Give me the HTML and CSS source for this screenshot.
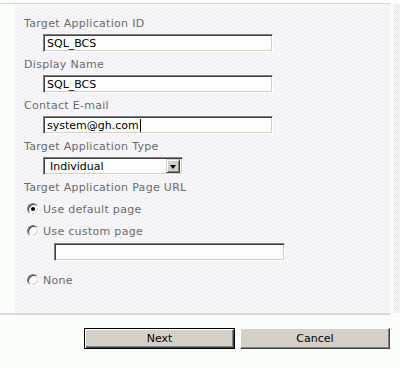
FILE: index.html
```html
<!DOCTYPE html>
<html lang="en">
<head>
  <meta charset="UTF-8">
  <title>Create New Target Application</title>
  <link rel="stylesheet" href="styles.css">
</head>
<body>
  <div class="page">
    <div class="top-rule"></div>
    <div class="section">
      <div class="panel">
        <div class="field-label">Target Application ID</div>
        <div class="textbox wide">SQL_BCS</div>

        <div class="field-label">Display Name</div>
        <div class="textbox wide">SQL_BCS</div>

        <div class="field-label">Contact E-mail</div>
        <div class="textbox wide">system@gh.com<span class="caret"></span></div>

        <div class="field-label">Target Application Type</div>
        <div class="dropdown">
          <span class="dropdown__text">Individual</span>
          <span class="dropdown__btn"><span class="arrow"></span></span>
        </div>

        <div class="field-label">Target Application Page URL</div>
        <div class="options">
          <label class="option"><span class="radio checked"></span>Use default page</label>
          <label class="option"><span class="radio"></span>Use custom page</label>
          <div class="textbox url"></div>
          <label class="option last"><span class="radio"></span>None</label>
        </div>
      </div>
      <div class="edge"></div>
    </div>
    <div class="bottom-rule"></div>
    <div class="actions">
      <button class="btn default">Next</button>
      <button class="btn">Cancel</button>
    </div>
  </div>
</body>
</html>
```

FILE: styles.css
```css
html, body {
  margin: 0;
  padding: 0;
  background: #fbfdfb;
  font-family: "DejaVu Sans", Verdana, sans-serif;
  font-size: 11px;
}

.page {
  width: 400px;
  height: 368px;
  overflow: hidden;
}

.top-rule {
  margin-top: 3px;
  width: 390px;
  height: 1px;
  background: #d6d6d6;
}

.section {
  display: flex;
}

.panel {
  margin-left: 15px;
  width: 375px;
  box-sizing: border-box;
  padding: 13px 0 22px 9px;
  background-color: #f2f0f4;
  background-image:
    radial-gradient(circle, #fdfcfe 0.6px, transparent 0.9px),
    radial-gradient(circle, #fdfcfe 0.6px, transparent 0.9px);
  background-size: 4px 4px;
  background-position: 0 0, 2px 2px;
}

.edge {
  flex: 1;
  margin-left: 3px;
  background: repeating-conic-gradient(#e4e4e4 0 25%, #fbfdfb 0 50%) 0 0 / 2px 2px;
}

.field-label {
  color: #6b6b6b;
  letter-spacing: 0.3px;
  line-height: 14px;
  height: 14px;
  margin-bottom: 3px;
}

.textbox {
  box-sizing: border-box;
  height: 18px;
  margin: 0 0 6px 19px;
  background: #fcfefc;
  color: #000;
  line-height: 14px;
  font-size: 11px;
  border: 1px solid;
  border-color: #808080 #ffffff #ffffff #808080;
  box-shadow: inset 1px 1px #404040, inset -1px -1px #d4d0c8;
  padding-top: 2px;
  padding-left: 3px;
  white-space: nowrap;
}

.wide {
  width: 230px;
}

.caret {
  display: inline-block;
  width: 1px;
  height: 13px;
  background: #000;
  vertical-align: -3px;
  margin-left: 1px;
}

.dropdown {
  box-sizing: border-box;
  display: flex;
  align-items: center;
  width: 140px;
  height: 18px;
  margin: 0 0 6px 19px;
  background: #fcfefc;
  border: 1px solid;
  border-color: #808080 #ffffff #ffffff #808080;
  box-shadow: inset 1px 1px #404040, inset -1px -1px #d4d0c8;
  padding: 2px;
}

.dropdown__text {
  flex: 1;
  padding-left: 4px;
  color: #000;
}

.dropdown__btn {
  box-sizing: border-box;
  width: 14px;
  height: 14px;
  display: flex;
  align-items: center;
  justify-content: center;
  background: #d4d0c8;
  border: 1px solid;
  border-color: #d4d0c8 #404040 #404040 #d4d0c8;
  box-shadow: inset 1px 1px #ffffff, inset -1px -1px #808080;
}

.arrow {
  width: 0;
  height: 0;
  border-left: 3.5px solid transparent;
  border-right: 3.5px solid transparent;
  border-top: 4px solid #000;
  margin-top: 1px;
}

.options {
  display: flex;
  flex-direction: column;
}

.option {
  display: flex;
  align-items: center;
  height: 22px;
  color: #6b6b6b;
  letter-spacing: 0.3px;
  padding-left: 3px;
}

.option.last {
  margin-top: 8px;
}

.radio {
  box-sizing: border-box;
  width: 12px;
  height: 12px;
  margin-right: 4px;
  border-radius: 50%;
  background: #ffffff;
  border: 1px solid;
  border-color: #808080 #ffffff #ffffff #808080;
  box-shadow: inset 1px 1px #404040, inset -1px -1px #d4d0c8;
  position: relative;
}

.radio.checked::after {
  content: "";
  position: absolute;
  left: 3px;
  top: 3px;
  width: 4px;
  height: 4px;
  border-radius: 50%;
  background: #000;
}

.textbox.url {
  width: 231px;
  margin: 1px 0 0 30px;
}

.bottom-rule {
  width: 390px;
  height: 2px;
  background: #dadada;
}

.actions {
  display: flex;
  justify-content: flex-end;
  gap: 5px;
  width: 390px;
  padding-top: 13px;
}

.btn {
  box-sizing: border-box;
  width: 150px;
  height: 21px;
  padding: 0;
  background: #d4d0c8;
  color: #000;
  font-family: "DejaVu Sans", Verdana, sans-serif;
  font-size: 11px;
  border: 1px solid;
  border-color: #ffffff #404040 #404040 #ffffff;
  box-shadow: inset -1px -1px #808080;
}

.btn.default {
  width: 151px;
  border: 1px solid #000;
  box-shadow: inset 1px 1px #ffffff, inset -1px -1px #404040, inset -2px -2px #808080;
}
```
